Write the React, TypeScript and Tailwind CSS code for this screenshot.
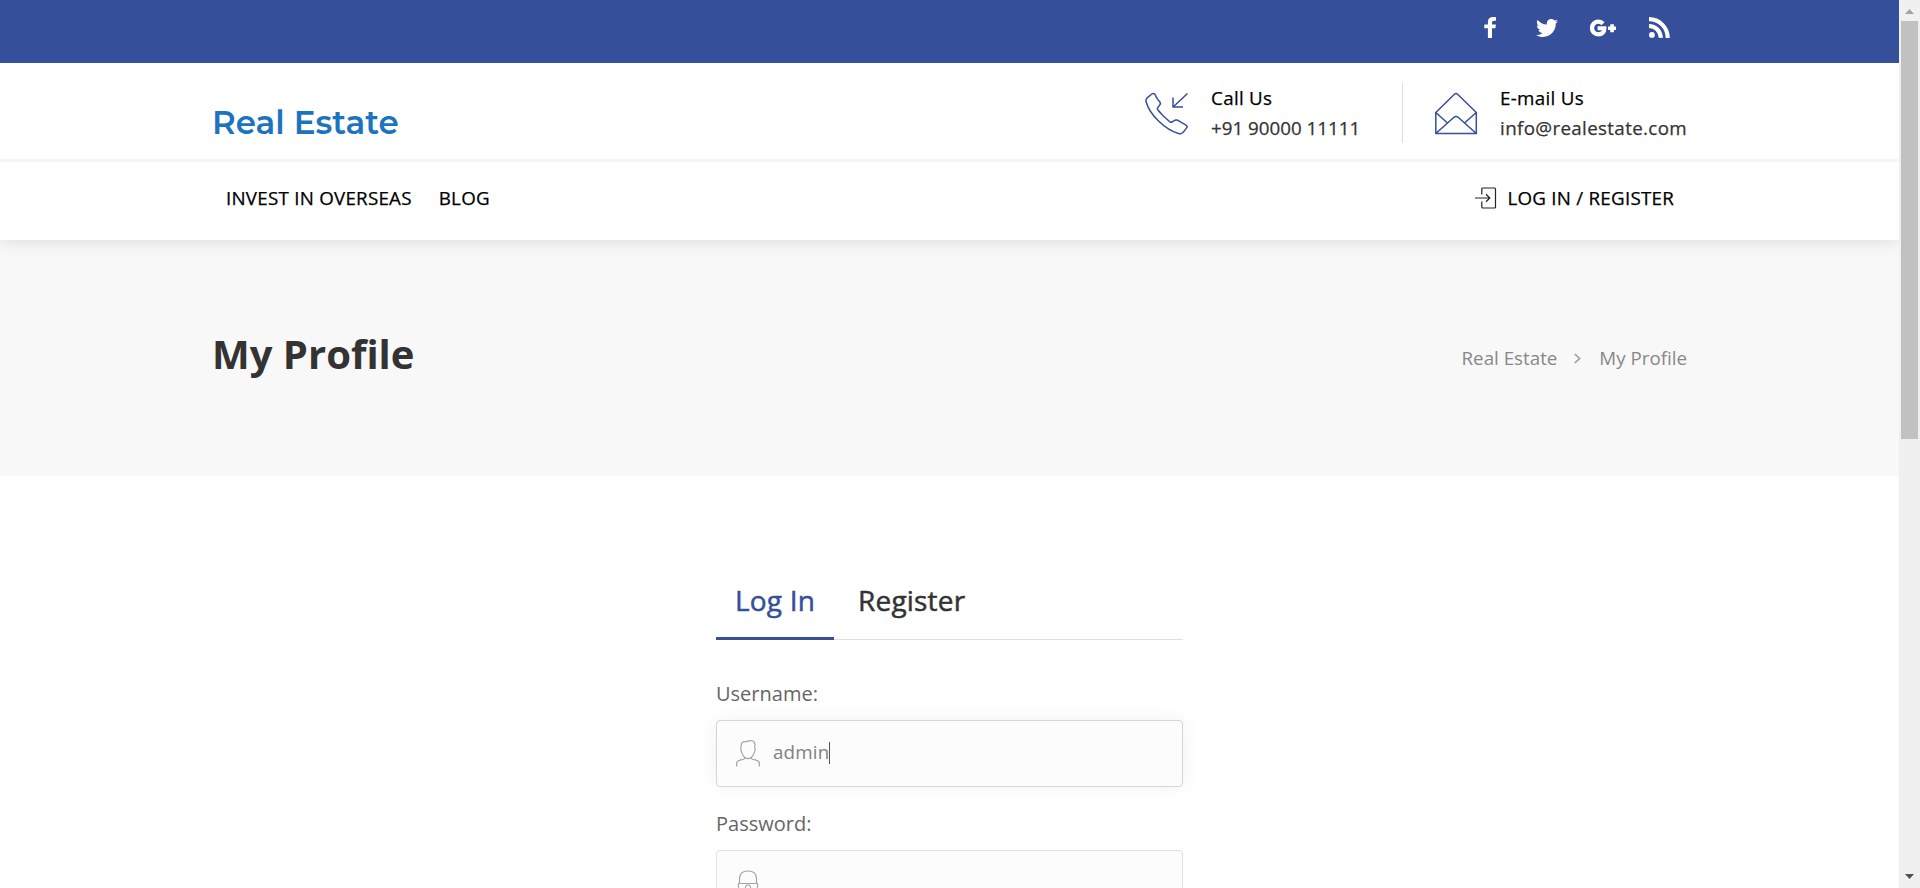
import React, { useState } from "react";
import { FaTwitter, FaGooglePlusG } from "react-icons/fa";

function PhoneIcon() {
  return (
    <svg className="h-[44px] w-[44px]" viewBox="0 0 44 44" fill="none" stroke="#354f9a" strokeWidth="1.5" strokeLinejoin="round" strokeLinecap="round">
      <path d="M6.800 2Q8.500 .8 9.800 2.200C10.500 3.300 11 4.500 12.200 6.600L15 10.200Q15.800 11.400 15 12.500C14.300 13.800 12.600 15 12.300 16.800Q12.500 17.800 13.500 18.500C15 20.800 17 22.500 19.500 25L25 30C26 30.600 26.600 30.400 27.500 29.600L30 28.200Q31.500 27.700 33 28.300L40.500 32.800Q42.800 34 41.800 35.500C40.800 37.300 39.500 38.800 38 40.500C36.500 42 35 41.900 33.500 41.500C20 37.500 4.500 22.500 1.200 10C.7 8 1 6.800 2.200 5.800Z" />
      <path d="M42.500 1.500 28.300 14.800M28 5.500V15H38" strokeLinecap="butt" />
    </svg>
  );
}

function MailIcon() {
  return (
    <svg className="h-[44px] w-[44px]" viewBox="0 0 44 44" fill="none" stroke="#354f9a" strokeWidth="1.5" strokeLinejoin="round">
      <path d="M.8 20.500 19.400 2.200Q21 .7 22.600 2.200L41.300 20.500V41.500H.8ZM.8 20.500 12.500 31M41.300 20.500 29.500 31M.8 41.500 18.700 25.500Q21 23.500 23.400 25.500L41.300 41.500" />
    </svg>
  );
}

function LoginIcon() {
  return (
    <svg className="h-[22px] w-[22px]" viewBox="0 0 22 22" fill="none" stroke="#222" strokeWidth="1.2">
      <path d="M6.800 7.500V2Q6.800 1 7.800 1H19.500Q20.500 1 20.500 2V20Q20.500 21 19.500 21H7.800Q6.800 21 6.800 20V14.500M0 11H14.500M11 7.300 14.800 11 11 14.700" />
    </svg>
  );
}

function UserIcon() {
  return (
    <svg className="h-[27px] w-6" viewBox="0 0 24 27" fill="none" stroke="#a5a5a5" strokeWidth="1.200">
      <path d="M.6 26.500V24C.6 21.600 2.200 20.700 4 20.200L7.500 19.300C8.500 18.900 8.800 18.500 8.800 17.700L6.500 14.500C5.800 13.500 5.500 12.300 5.300 11Q4.400 9.500 4.900 8C5.200 5.500 5.300 3.500 6.200 2.400C7.600 1.300 9 1.800 10.500 1.600C13 .7 14.500.200 17 1C19 1.800 19.200 4 18.700 7.500Q19.600 9 18.800 11C18.500 12.500 18 13.800 17.500 14.500L15.200 17.700C15.200 18.500 15.500 18.900 16.500 19.300L20 20.200C22 20.700 23.400 21.600 23.400 24V26.500M8.800 17.500Q12 19.800 15.200 17.500" />
    </svg>
  );
}

function LockIcon() {
  return (
    <svg className="h-[32px] w-6" viewBox="0 0 24 32" fill="none" stroke="#a5a5a5" strokeWidth="1.200">
      <path d="M3.500 13.500V8.500C3.500 3.500 6.500 1 12 1S20.500 3.500 20.500 8.500V13.500M2.500 13.500H21.500V30.500H2.500ZM11 23V19.800A2.500 2.500 0 1 1 13 19.800V23Z" />
    </svg>
  );
}

function FacebookIcon() {
  return (
    <svg className="h-[21px] w-[12px]" viewBox="0 0 12 21" fill="currentColor">
      <path d="M12 .2V3.700H10C8.400 3.700 8 4.500 8 5.600V7.500H11.900L11.400 11.200H8V21H3.900V11.200H.3V7.500H3.900V4.900C3.900 1.700 5.900 0 9 0C10.400 0 11.600.1 12 .2Z" />
    </svg>
  );
}

function RssIcon() {
  return (
    <svg className="h-[21px] w-[21px]" viewBox="0 0 21 21" fill="none" stroke="currentColor" strokeWidth="4.100">
      <circle cx="2.900" cy="17.900" r="2.900" fill="currentColor" stroke="none" />
      <path d="M0 9A11.700 11.700 0 0 1 11.700 20.900M0 2.100A18.700 18.700 0 0 1 18.700 20.900" />
    </svg>
  );
}

const socials = [
  { name: "Facebook", node: <FacebookIcon />, box: "" },
  { name: "Twitter", node: <FaTwitter size={22} />, box: "pl-[2px]" },
  { name: "Google Plus", node: <FaGooglePlusG size={26} stroke="white" strokeWidth={34} />, box: "pl-[1px]" },
  { name: "RSS", node: <RssIcon />, box: "" },
];

export default function App() {
  const [tab, setTab] = useState("login");
  return (
    <div className="flex h-[888px] w-[1920px] overflow-hidden bg-white font-['Open_Sans',sans-serif] text-[18.75px]">
      <div className="flex min-w-0 flex-1 flex-col">
        <div className="relative z-20 h-[63px] shrink-0 bg-[#354f9a]">
          <div className="mx-auto flex h-[55px] w-[1475px] items-center justify-end gap-[26.500px] pr-[13px] text-white">
            {socials.map((s) => (
              <a key={s.name} aria-label={s.name} className={`flex w-[30px] justify-center ${s.box}`}>
                {s.node}
              </a>
            ))}
          </div>
        </div>
        <header className="relative z-10 h-[177px] shrink-0 bg-white shadow-[0_1px_16px_rgba(0,0,0,0.12)]">
          <div className="h-[99px] border-b-[3px] border-[#f6f6f6]">
            <div className="mx-auto flex h-full w-[1475px] justify-between">
              <div className="pt-[40px] font-['Montserrat','Inter',sans-serif] text-[32.5px] leading-10 font-semibold tracking-[0.050px] text-[#1e73be]">
                Real Estate
              </div>
              <div className="flex pt-[20px]">
                <div className="flex h-[60px] w-[258px] border-r border-[#dcdcdc]">
                  <div className="mr-[22px] pt-[9px]"><PhoneIcon /></div>
                  <div className="leading-[30px] whitespace-nowrap [-webkit-text-stroke:0.25px_currentColor]">
                    <div className="tracking-[0.3px] text-black">Call Us</div>
                    <div className="text-[#333]">+91 90000 11111</div>
                  </div>
                </div>
                <div className="flex pl-[32px]">
                  <div className="mr-[21px] pt-[9px]"><MailIcon /></div>
                  <div className="leading-[30px] whitespace-nowrap [-webkit-text-stroke:0.25px_currentColor]">
                    <div className="tracking-[0.3px] text-black">E-mail Us</div>
                    <div className="tracking-[0.350px] text-[#333]">info@realestate.com</div>
                  </div>
                </div>
              </div>
            </div>
          </div>
          <nav className="mx-auto flex h-[72px] w-[1475px] items-center justify-between pr-[13px] pl-[14px] tracking-[0.25px] text-black [-webkit-text-stroke:0.25px_currentColor]">
            <div className="flex gap-[27px]">
              <a>INVEST IN OVERSEAS</a>
              <a>BLOG</a>
            </div>
            <a className="flex items-center gap-[10px]">
              <LoginIcon />
              LOG IN / REGISTER
            </a>
          </nav>
        </header>
        <section className="h-[236px] shrink-0 bg-[#f8f8f8]">
          <div className="mx-auto flex h-full w-[1475px] items-center justify-between">
            <h1 className="pb-2 text-[40px] font-bold text-[#333]">My Profile</h1>
            <div className="flex items-center pt-px text-[#888]">
              <span>Real Estate</span>
              <svg className="mx-[17px] h-[11px] w-[8px]" viewBox="0 0 8 11" fill="none" stroke="#999" strokeWidth="1.500">
                <path d="M.8 1 5.600 5.500 .8 10" />
              </svg>
              <span>My Profile</span>
            </div>
          </div>
        </section>
        <main className="mx-auto w-[467px] pt-[85px]">
          <div className="flex h-[79px] border-b border-[#e0e0e0] text-[28px] tracking-[0.2px] [-webkit-text-stroke:0.5px_currentColor]">
            <button
              onClick={() => setTab("login")}
              className="h-[79px] w-[118px] border-b-[3px] border-[#354f9a] pt-[1px] text-[#354f9a]"
            >
              Log In
            </button>
            <button onClick={() => setTab("register")} className="ml-[24px] h-[79px] pb-[2px] text-[#333]">
              Register
            </button>
          </div>
          <label className="mt-[39px] block text-[20px] leading-[30px] text-[#666]">Username:</label>
          <div className="mt-[11px] flex h-[67px] items-center rounded-[4px] border border-[#d5d5d5] bg-[#fcfcfc] pl-[19px] text-[#808080] shadow-[0_0_20px_rgba(0,0,0,0.06)]">
            <UserIcon />
            <span className="ml-[13px] pb-[3px] tracking-[0.2px]">admin</span>
            <span className="mb-[1px] h-[22px] w-px bg-[#555]" />
          </div>
          <label className="mt-[22px] block text-[20px] leading-[30px] text-[#666]">Password:</label>
          <div className="mt-[11px] flex h-[67px] rounded-[4px] border border-[#e0e0e0] bg-[#fcfcfc] pt-[19px] pl-[19px]">
            <LockIcon />
          </div>
        </main>
      </div>
      <div className="relative z-20 flex w-[21px] shrink-0 flex-col items-center bg-[#f0f0f0]">
        <svg className="mt-[9px] h-[5px] w-[9px]" viewBox="0 0 9 5"><path d="M4.500 0 9 5H0Z" fill="#a3a3a3" /></svg>
        <div className="mt-[7px] h-[418px] w-[17px] bg-[#c1c1c1]" />
        <svg className="mt-auto mb-[9px] h-[5px] w-[9px]" viewBox="0 0 9 5"><path d="M0 0H9L4.500 5Z" fill="#505050" /></svg>
      </div>
    </div>
  );
}
